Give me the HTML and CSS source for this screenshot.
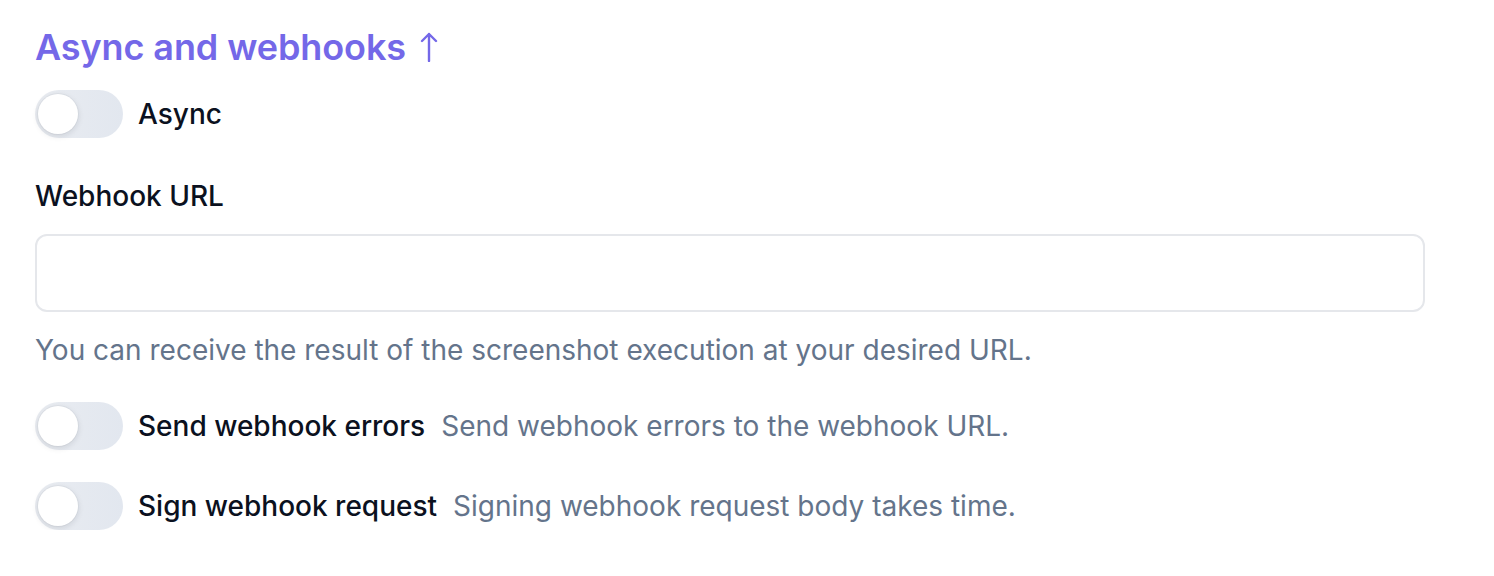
FILE: index.html
```html
<!DOCTYPE html>
<html>
<head>
<meta charset="utf-8">
<link rel="stylesheet" href="styles.css">
</head>
<body>
<section class="panel">
  <h2 class="title">Async and webhooks <span class="arrow"><svg width="18" height="30" viewBox="0 0 18 30"><path d="M9 29V2M2 9L9 2L16 9" fill="none" stroke="currentColor" stroke-width="2.4" stroke-linecap="round" stroke-linejoin="round"/></svg></span></h2>

  <div class="toggle-row first">
    <span class="toggle"><span class="knob"></span></span>
    <span class="label">Async</span>
  </div>

  <div class="field">
    <label class="field-label">Webhook URL</label>
    <div class="input"></div>
    <p class="help">You can receive the result of the screenshot execution at your desired URL.</p>
  </div>

  <div class="toggle-row after-field">
    <span class="toggle"><span class="knob"></span></span>
    <span class="label">Send webhook errors</span>
    <span class="desc">Send webhook errors to the webhook URL.</span>
  </div>

  <div class="toggle-row">
    <span class="toggle"><span class="knob"></span></span>
    <span class="label">Sign webhook request</span>
    <span class="desc">Signing webhook request body takes time.</span>
  </div>
</section>
</body>
</html>
```

FILE: styles.css
```css
* { box-sizing: border-box; }
html, body { margin: 0; padding: 0; background: #ffffff; }
body { font-family: Inter, "Noto Sans", sans-serif; color: #0f172a; }
.panel { padding: 26px 69px 0 35px; display: flex; flex-direction: column; }
.title { margin: 0; font-size: 36px; font-weight: 600; color: #7468e8; line-height: 42px; display: flex; align-items: center; gap: 14px; letter-spacing: -0.1px; }
.arrow { display: inline-flex; color: #7468e8; }
.toggle-row { display: flex; align-items: center; height: 48px; margin-top: 32px; }
.toggle-row.first { margin-top: 22px; }
.toggle-row.after-field { margin-top: 34px; }
.toggle { position: relative; width: 88px; height: 48px; border-radius: 24px; background: linear-gradient(90deg, #e9ecf1 0%, #e2e7ef 100%); flex: none; }
.knob { position: absolute; left: 3px; top: 4px; width: 40px; height: 40px; border-radius: 50%; background: #ffffff; box-shadow: 0 2px 6px rgba(15, 23, 42, 0.12), 0 0 0 1px rgba(15,23,42,0.03); }
.label { margin-left: 15px; font-size: 28px; font-weight: 500; color: #0b1120; line-height: 36px; }
.desc { margin-left: 16px; font-size: 28px; color: #64748b; line-height: 36px; }
.field { display: flex; flex-direction: column; margin-top: 40px; }
.field-label { font-size: 28px; font-weight: 500; color: #0b1120; line-height: 36px; }
.input { margin-top: 20px; height: 78px; border: 2px solid #e5e7eb; border-radius: 12px; }
.help { margin: 20px 0 0; font-size: 28px; color: #64748b; line-height: 36px; }
```
